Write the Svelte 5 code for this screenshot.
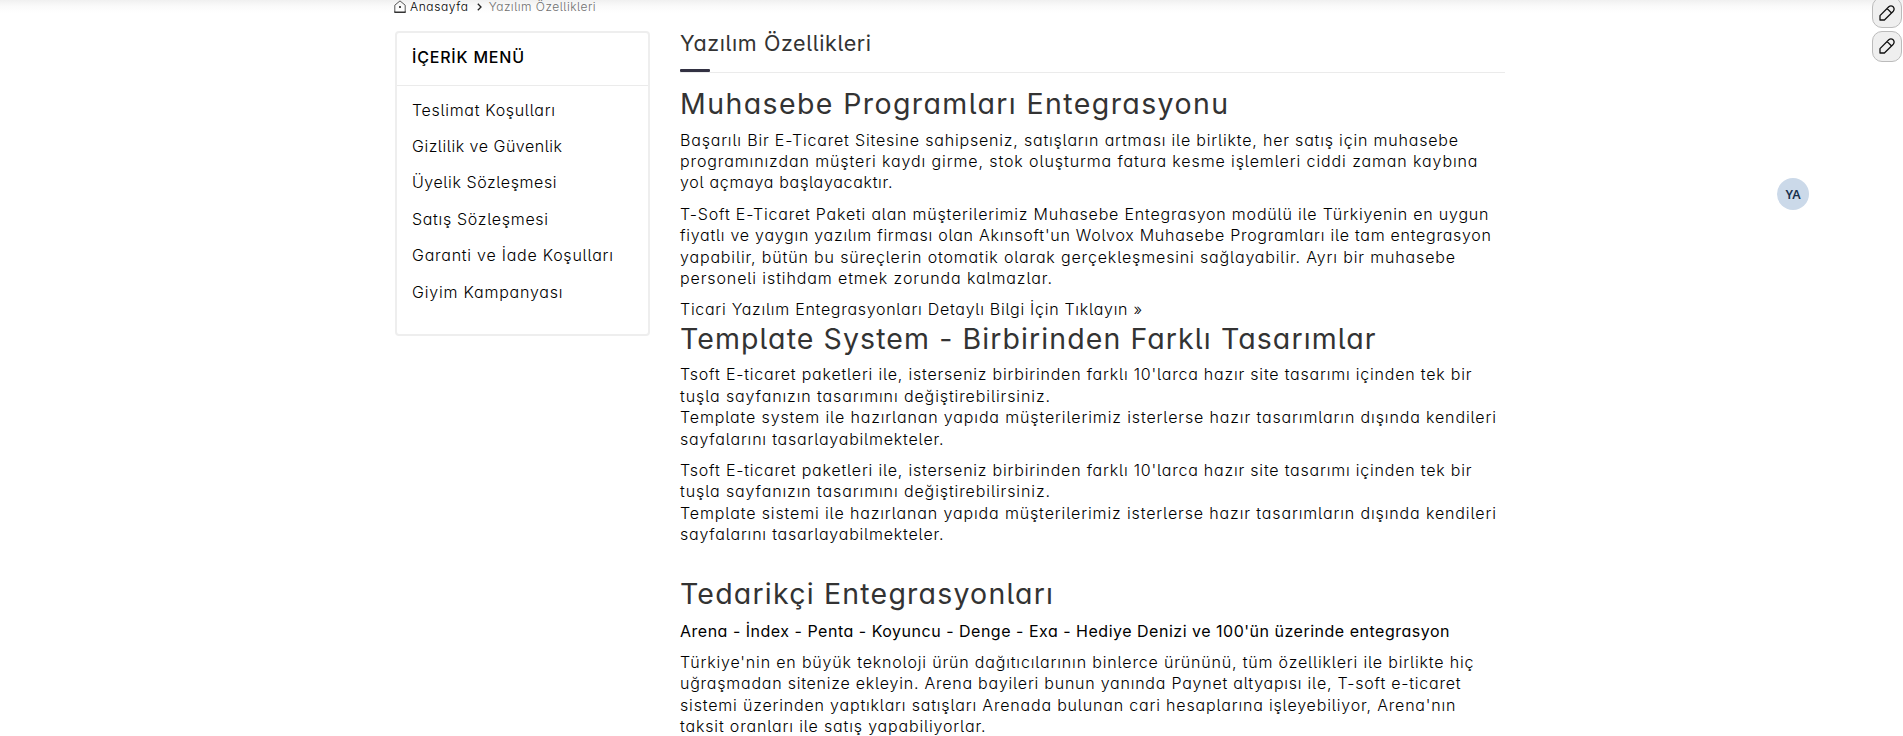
<script>
  const menu = [
    ['Teslimat Koşulları', 143],
    ['Gizlilik ve Güvenlik', 150],
    ['Üyelik Sözleşmesi', 144.5],
    ['Satış Sözleşmesi', 136],
    ['Garanti ve İade Koşulları', 201],
    ['Giyim Kampanyası', 150.5]
  ];

  const blocks = [
    { kind: 'h2', lines: [['Muhasebe Programları Entegrasyonu', 548]] },
    {
      kind: 'p',
      lines: [
        ['Başarılı Bir E-Ticaret Sitesine sahipseniz, satışların artması ile birlikte, her satış için muhasebe', 778],
        ['programınızdan müşteri kaydı girme, stok oluşturma fatura kesme işlemleri ciddi zaman kaybına', 797.5],
        ['yol açmaya başlayacaktır.', 212.5]
      ]
    },
    {
      kind: 'p',
      lines: [
        ['T-Soft E-Ticaret Paketi alan müşterilerimiz Muhasebe Entegrasyon modülü ile Türkiyenin en uygun', 808.5],
        ["fiyatlı ve yaygın yazılım firması olan Akınsoft'un Wolvox Muhasebe Programları ile tam entegrasyon", 811],
        ['yapabilir, bütün bu süreçlerin otomatik olarak gerçekleşmesini sağlayabilir. Ayrı bir muhasebe', 775],
        ['personeli istihdam etmek zorunda kalmazlar.', 372]
      ]
    },
    { kind: 'link', lines: [['Ticari Yazılım Entegrasyonları Detaylı Bilgi İçin Tıklayın »', 462]] },
    { kind: 'h2', lines: [['Template System - Birbirinden Farklı Tasarımlar', 695.5]] },
    {
      kind: 'p',
      lines: [
        ["Tsoft E-ticaret paketleri ile, isterseniz birbirinden farklı 10'larca hazır site tasarımı içinden tek bir", 791.5],
        ['tuşla sayfanızın tasarımını değiştirebilirsiniz.', 370],
        ['Template system ile hazırlanan yapıda müşterilerimiz isterlerse hazır tasarımların dışında kendileri', 816],
        ['sayfalarını tasarlayabilmekteler.', 263.5]
      ]
    },
    {
      kind: 'p',
      lines: [
        ["Tsoft E-ticaret paketleri ile, isterseniz birbirinden farklı 10'larca hazır site tasarımı içinden tek bir", 791.5],
        ['tuşla sayfanızın tasarımını değiştirebilirsiniz.', 370],
        ['Template sistemi ile hazırlanan yapıda müşterilerimiz isterlerse hazır tasarımların dışında kendileri', 816],
        ['sayfalarını tasarlayabilmekteler.', 263.5]
      ]
    },
    { kind: 'h2 spaced', lines: [['Tedarikçi Entegrasyonları', 373]] },
    { kind: 'lead', lines: [["Arena - İndex - Penta - Koyuncu - Denge - Exa - Hediye Denizi ve 100'ün üzerinde entegrasyon", 769.5]] },
    {
      kind: 'p',
      lines: [
        ["Türkiye'nin en büyük teknoloji ürün dağıtıcılarının binlerce ürününü, tüm özellikleri ile birlikte hiç", 793.5],
        ['uğraşmadan sitenize ekleyin. Arena bayileri bunun yanında Paynet altyapısı ile, T-soft e-ticaret', 780.5],
        ["sistemi üzerinden yaptıkları satışları Arenada bulunan cari hesaplarına işleyebiliyor, Arena'nın", 775.5],
        ['taksit oranları ile satış yapabiliyorlar.', 305.5]
      ]
    }
  ];

  // Tracks the text out or in so that the line takes up the given width.
  function fit(node, width) {
    node.style.letterSpacing = '0px';
    const natural = node.getBoundingClientRect().width;
    node.style.letterSpacing = `${(width - natural) / (node.textContent.length - 1)}px`;
  }
</script>

{#snippet pencil()}
  <svg viewBox="0 0 16 16" width="16" height="16">
    <path d="M1 15V10.6L9.8 1.7Q12 -.1 14.2 1.8Q16 4 14.3 6.2L5.4 15ZM8.2 3.6L12.3 7.8" />
  </svg>
{/snippet}

<div class="page">
  <div class="wrap">
    <nav class="crumbs">
      <svg class="home" viewBox="0 0 12 13" width="12" height="13">
        <path d="M.8 12V5.2L6 .9L11.2 5.2V12" fill="none" stroke="#555" stroke-width="1" />
        <path d="M.3 12.2H11.7" stroke="#000" stroke-width="1.2" />
        <circle cx="6" cy="7" r="1" fill="#111" />
      </svg>
      <a href="#home"><span class="line" use:fit={58}>Anasayfa</span></a>
      <svg class="chev" viewBox="0 0 5 8" width="5" height="8">
        <path d="M.8 .8L4 4L.8 7.2" fill="none" stroke="#222" stroke-width="1.3" />
      </svg>
      <span class="line current" use:fit={107}>Yazılım Özellikleri</span>
    </nav>

    <div class="cols">
      <aside>
        <div class="head"><span class="line" use:fit={112}>İÇERİK MENÜ</span></div>
        <ul>
          {#each menu as [label, w]}
            <li><a href="#menu"><span class="line" use:fit={w}>{label}</span></a></li>
          {/each}
        </ul>
      </aside>

      <main>
        <h1><span class="line" use:fit={191}>Yazılım Özellikleri</span></h1>
        {#each blocks as b}
          <div class={b.kind}>
            {#each b.lines as [text, w]}
              <span class="line" use:fit={w}>{text}</span>
            {/each}
          </div>
        {/each}
      </main>
    </div>
  </div>

  <div class="tools">
    <button aria-label="Düzenle">{@render pencil()}</button>
    <button aria-label="Düzenle">{@render pencil()}</button>
  </div>
  <div class="avatar">YA</div>
</div>

<style>
  :global(body) {
    margin: 0;
    background: #fff;
  }
  .page {
    position: relative;
    height: 736px;
    overflow: hidden;
    background: linear-gradient(#f0f0f0, #fafafa 6px, #fff 13px) no-repeat;
    font: 300 16px/21.4px Inter, sans-serif;
    font-feature-settings: 'cv11', 'cv05';
    color: #000;
  }
  .wrap {
    width: 1110px;
    margin-left: 395px;
  }
  .line {
    display: block;
    width: max-content;
    white-space: pre;
  }
  a {
    color: inherit;
    text-decoration: none;
  }
  .crumbs {
    display: flex;
    align-items: flex-start;
    height: 31px;
    font-size: 12px;
    line-height: 13px;
    margin-left: -1px;
  }
  .crumbs .home {
    margin-right: 4px;
  }
  .crumbs .chev {
    margin: 3px 7px 0 8px;
  }
  .current {
    color: #707070;
  }
  .cols {
    display: flex;
    align-items: flex-start;
    gap: 30px;
  }
  aside {
    box-sizing: border-box;
    width: 255px;
    height: 305px;
    border: 2px solid #eee;
    border-radius: 4px;
  }
  .head {
    height: 52px;
    line-height: 49px;
    padding-left: 15px;
    border-bottom: 1px solid #ebebeb;
    font-weight: 500;
  }
  ul {
    list-style: none;
    margin: 0;
    padding: 5.5px 15px;
  }
  li {
    line-height: 36.4px;
  }
  main {
    flex: 1;
  }
  h1 {
    position: relative;
    box-sizing: border-box;
    height: 42px;
    margin: 0 0 13px;
    border-bottom: 1px solid #ebebeb;
    font-size: 21.5px;
    font-weight: 400;
    line-height: 25px;
    color: #333;
  }
  h1::after {
    content: '';
    position: absolute;
    left: 0;
    bottom: 0;
    width: 30px;
    height: 3px;
    border-radius: 1px;
    background: #323142;
  }
  .h2 {
    margin-bottom: 8.4px;
    font-size: 28.5px;
    font-weight: 400;
    line-height: 35.2px;
    color: #333;
  }
  .h2.spaced {
    margin: 30px 0 9.7px;
  }
  .p,
  .lead {
    margin-bottom: 10px;
  }
  .lead {
    font-weight: 400;
  }
  .tools {
    position: absolute;
    top: -3px;
    right: 1px;
    display: flex;
    flex-direction: column;
    gap: 3px;
  }
  button {
    display: flex;
    align-items: center;
    justify-content: center;
    width: 30px;
    height: 31px;
    padding: 0;
    border: 1px solid #bbb;
    border-radius: 10px;
    background: #efefef;
  }
  button + button {
    padding-bottom: 2px;
  }
  button path {
    fill: none;
    stroke: #111;
    stroke-width: 1.3;
    stroke-linejoin: round;
  }
  .avatar {
    position: absolute;
    left: 1777px;
    top: 178px;
    width: 32px;
    height: 32px;
    border-radius: 50%;
    background: #cbd9e9;
    color: #17304d;
    font: 600 12.5px/33px 'Noto Sans', sans-serif;
    text-align: center;
  }
</style>
